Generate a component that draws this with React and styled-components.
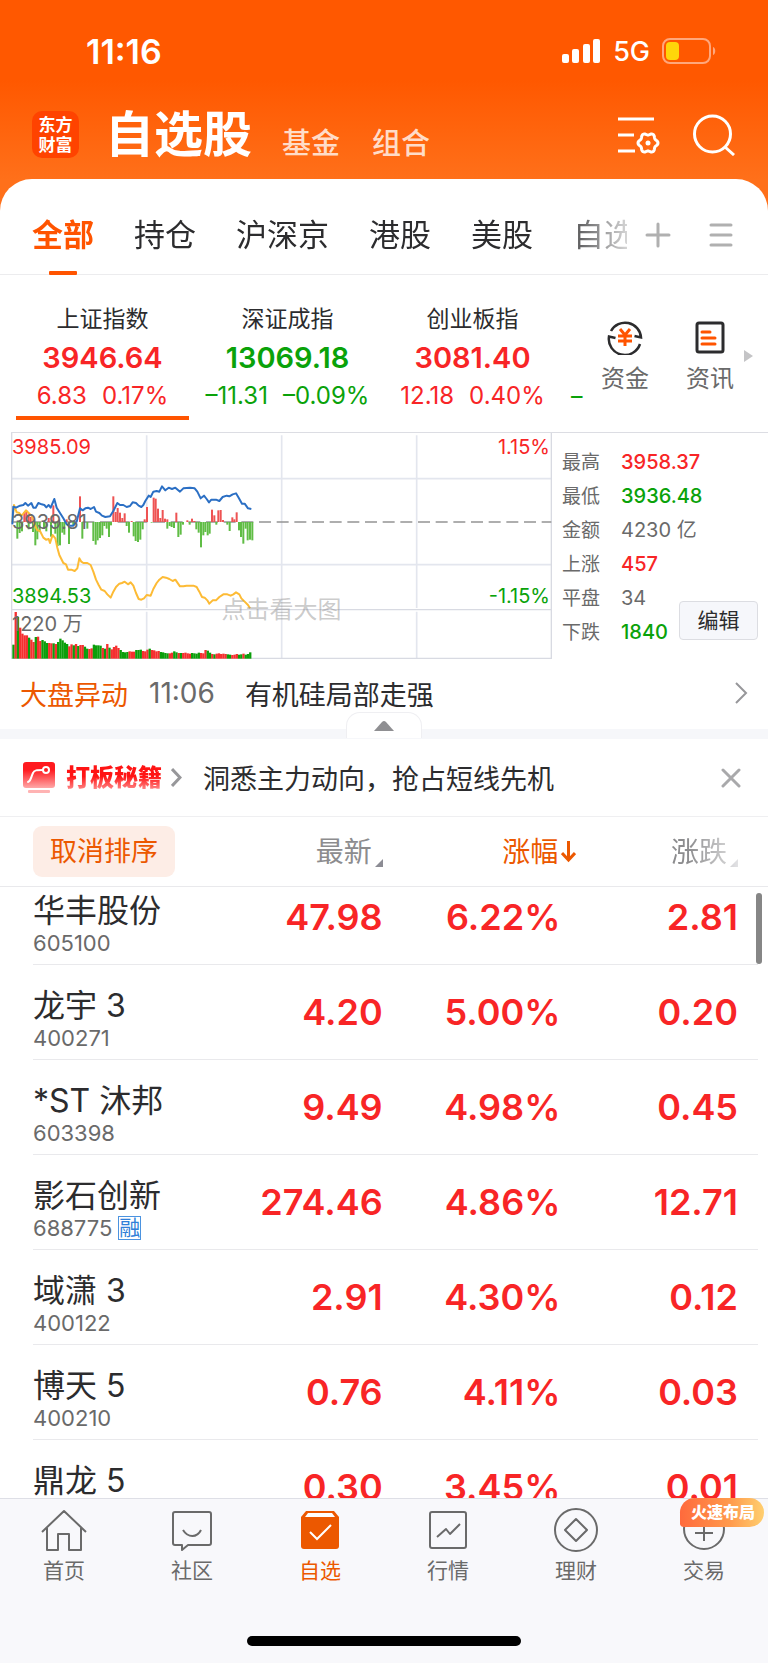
import React from 'react';
import styled, { createGlobalStyle } from 'styled-components';

const RED = '#f82526';
const GREEN = '#0aa20a';
const ORANGE = '#ff5400';
const DEEP_ORANGE = '#ec5800';
const DARK = '#2c2c2e';
const GREY = '#6a6a6a';

const GlobalStyle = createGlobalStyle`
    * {
        box-sizing: border-box;
    }

    body {
        margin: 0;
        background: white;
        color: ${DARK};
        font-family: Inter, 'Noto Sans CJK SC', sans-serif;
    }

    button {
        padding: 0;
        border: 0;
        background: none;
        color: inherit;
        font: inherit;
        cursor: pointer;
    }

    a {
        color: inherit;
        text-decoration: none;
    }

    svg {
        display: block;
        flex: none;
    }
`;

const Page = styled.div`
    display: flex;
    flex-direction: column;
    height: 100vh;
    overflow: hidden;
`;

/* ---------- header ---------- */

const Header = styled.header`
    background: linear-gradient(#ff5800 0, #ff5800 80px, #ff701a 180px, #ff701a 100%);
`;

const StatusBar = styled.div`
    display: flex;
    align-items: center;
    justify-content: space-between;
    height: 102px;
    padding: 0 52px 0 86px;
    color: white;
`;

const Clock = styled.time`
    font-size: 34px;
    font-weight: 600;
`;

const StatusIcons = styled.div`
    display: flex;
    align-items: center;
    gap: 12px;
    font-size: 27px;
    font-weight: 500;
`;

const TitleBar = styled.div`
    display: flex;
    align-items: center;
    height: 77px;
    padding: 0 33px 12px 32px;
    color: white;
`;

const Logo = styled.div`
    display: flex;
    align-items: center;
    justify-content: center;
    width: 47px;
    height: 47px;
    border-radius: 10px;
    background: #ff4300;
    font-size: 17px;
    font-weight: 700;
    line-height: 20px;
    text-align: center;
`;

const Titles = styled.nav`
    display: flex;
    flex: 1;
    align-items: flex-end;
    margin-left: 26px;
`;

const Title = styled.h1`
    margin: 0 30px 0 0;
    font-size: 49px;
    font-weight: 700;
    line-height: 58px;
`;

const SubTitle = styled.a`
    margin-right: 32px;
    color: #ffdcc8;
    font-size: 29px;
    font-weight: 500;
    line-height: 40px;
`;

const HeaderActions = styled.div`
    display: flex;
    gap: 33px;
`;

/* ---------- tabs ---------- */

const TabBar = styled.div`
    display: flex;
    align-items: center;
    height: 96px;
    padding-right: 35px;
    border-bottom: 1px solid #ececee;
    border-radius: 32px 32px 0 0;
    background: white;
`;

const TabList = styled.nav`
    display: flex;
    flex: 1;
    gap: 40px;
    height: 96px;
    min-width: 0;
    margin-right: 18px;
    padding-left: 32px;
    overflow: hidden;
    mask-image: linear-gradient(to left, rgba(0, 0, 0, 0.2), black 70px);
`;

const Tab = styled.a`
    position: relative;
    flex: none;
    color: ${(props) => (props.$active ? ORANGE : DARK)};
    font-size: 31px;
    font-weight: ${(props) => (props.$active ? 700 : 400)};
    line-height: 112px;

    &::after {
        position: absolute;
        bottom: 0;
        left: 50%;
        width: 28px;
        height: 4px;
        margin-left: -14px;
        border-radius: 1px;
        background: ${(props) => (props.$active ? ORANGE : 'transparent')};
        content: '';
    }
`;

const TabActions = styled.div`
    display: flex;
    gap: 38px;
    padding-top: 16px;
`;

/* ---------- indices ---------- */

const Indices = styled.section`
    display: flex;
    height: 157px;
    padding: 12px 15px 0 16px;
`;

const IndexList = styled.div`
    display: flex;
    flex: 1;
    gap: 12px;
    min-width: 0;
    overflow: hidden;
`;

const IndexCard = styled.a`
    display: flex;
    flex: none;
    flex-direction: column;
    align-items: center;
    width: 173px;
    height: 133px;
    border-bottom: 4px solid ${(props) => (props.$active ? ORANGE : 'transparent')};
    color: ${(props) => (props.$down ? GREEN : RED)};
    white-space: nowrap;
`;

const IndexName = styled.span`
    height: 48px;
    padding-top: 14px;
    color: ${DARK};
    font-size: 23px;
    line-height: 36px;
`;

const IndexValue = styled.strong`
    font-size: 29px;
    font-weight: 600;
    line-height: 46px;
`;

const IndexChange = styled.span`
    display: flex;
    gap: 15px;
    font-size: 24px;
    line-height: 30px;
`;

const NextIndex = styled.span`
    padding-top: 94px;
    color: ${GREEN};
    font-size: 23px;
    line-height: 30px;
`;

const Shortcuts = styled.div`
    display: flex;
    gap: 37px;
    padding-top: 32px;
`;

const Shortcut = styled.a`
    display: flex;
    flex-direction: column;
    align-items: center;
    gap: 6px;
    color: ${GREY};
    font-size: 24px;
    line-height: 36px;
`;

const MoreArrow = styled.i`
    align-self: flex-start;
    margin: 63px 0 0 10px;
    border: 6px solid transparent;
    border-right: 0;
    border-left: 9px solid #c4c4c6;
`;

/* ---------- chart ---------- */

const Market = styled.section`
    display: flex;
    margin-left: 11px;
    border-top: 1px solid #dcdde3;
`;

const Chart = styled.div`
    position: relative;
    flex: 1;
    height: 226px;
    font-size: 20px;
    line-height: 24px;

    svg {
        width: 100%;
        height: 100%;
    }
`;

const ChartLabel = styled.span`
    position: absolute;
    top: ${(props) => props.$top}px;
    ${(props) => (props.$right ? 'right: 2px' : 'left: 1px')};
    color: ${(props) => props.$color};
`;

const ChartHint = styled.span`
    position: absolute;
    top: 159px;
    right: 0;
    left: 0;
    color: rgba(130, 130, 130, 0.42);
    font-size: 24px;
    line-height: 36px;
    text-align: center;
`;

const Facts = styled.div`
    position: relative;
    width: 216px;
    padding: 12px 0 0 10px;
`;

const FactList = styled.dl`
    display: grid;
    grid-template-columns: 59px 1fr;
    grid-auto-rows: 34px;
    align-items: center;
    margin: 0;
    font-size: 20px;
    line-height: 33px;
`;

const FactName = styled.dt`
    color: ${GREY};
    font-size: 19px;
`;

const FactValue = styled.dd`
    margin: 0;
    color: ${(props) => props.$color};
    font-weight: ${(props) => (props.$color === GREY ? 400 : 500)};
`;

const EditButton = styled.button`
    position: absolute;
    right: 10px;
    bottom: 19px;
    width: 79px;
    height: 39px;
    border: 1px solid #dcdde2;
    border-radius: 4px;
    background: #f6f7fb;
    font-size: 21px;
    line-height: 36px;
`;

/* ---------- news and promo ---------- */

const News = styled.a`
    display: flex;
    align-items: center;
    height: 70px;
    padding: 0 20px 2px;
    font-size: 27px;
`;

const NewsTag = styled.span`
    margin-right: 21px;
    color: ${DEEP_ORANGE};
`;

const NewsTime = styled.time`
    margin-right: 30px;
    color: ${GREY};
    font-size: 28px;
`;

const NewsText = styled.span`
    flex: 1;
`;

const Band = styled.div`
    position: relative;
    height: 10px;
    background: #f6f7fa;
`;

const Handle = styled.button`
    position: absolute;
    bottom: 1px;
    left: 50%;
    display: flex;
    align-items: center;
    justify-content: center;
    width: 76px;
    height: 26px;
    border: 1px solid #efeff2;
    border-bottom: 0;
    margin-left: -38px;
    border-radius: 14px 14px 0 0;
    background: white;
`;

const Promo = styled.div`
    display: flex;
    align-items: center;
    height: 78px;
    padding: 0 27px 0 23px;
    border-bottom: 1px solid #efeff1;
    font-size: 27px;
`;

const PromoName = styled.b`
    margin: 0 9px 0 11px;
    background: linear-gradient(#ff1414 45%, #ffb0b0);
    background-clip: text;
    color: transparent;
    font-size: 24px;
    font-weight: 900;
    line-height: 32px;
`;

const PromoText = styled.span`
    flex: 1;
    margin-left: 21px;
`;

/* ---------- stock list ---------- */

const StockArea = styled.main`
    position: relative;
    flex: 1;
    min-height: 0;
    overflow: hidden;
`;

const StockTable = styled.table`
    display: block;

    thead,
    tbody {
        display: block;
    }
`;

const HeadRow = styled.tr`
    display: grid;
    grid-template-columns: 172px repeat(3, 1fr);
    align-items: center;
    height: 70px;
    padding: 0 30px 0 33px;
    border-bottom: 1px solid #e9e9ec;
`;

const HeadCell = styled.th`
    display: flex;
    justify-content: flex-end;
    padding: 0;
    font-weight: 400;

    &:first-child {
        justify-content: flex-start;
    }
`;

const ResetButton = styled.button`
    width: 142px;
    height: 51px;
    border-radius: 9px;
    background: #fdede6;
    color: ${DEEP_ORANGE};
    font-size: 27px;
    line-height: 51px;
`;

const SortButton = styled.button`
    display: flex;
    align-items: center;
    gap: 3px;
    margin-right: ${(props) => (props.$active ? '-16px' : '0')};
    color: ${(props) => (props.$active ? DEEP_ORANGE : '#8c8c8e')};
    font-size: 28px;
    line-height: 40px;
    mask-image: ${(props) => (props.$faded ? 'linear-gradient(to left, rgba(0, 0, 0, 0.25), black 50px)' : 'none')};
`;

const Corner = styled.i`
    align-self: flex-end;
    margin-bottom: 5px;
    border-bottom: 8px solid #8c8c94;
    border-left: 8px solid transparent;
`;

const Row = styled.tr`
    display: grid;
    grid-template-columns: 172px repeat(3, 1fr);
    align-items: end;
    height: 95px;
    margin: 0 10px 0 33px;
    padding: 0 20px 7px 0;
    border-bottom: 1px solid #e9e9ec;

    /* the list is scrolled a little way under its header */
    &:first-child {
        height: 78px;
    }
`;

const NameCell = styled.td`
    padding: 0;
`;

const StockName = styled.div`
    font-size: 32px;
    line-height: 36px;
    white-space: nowrap;
`;

const StockCode = styled.div`
    display: flex;
    align-items: center;
    gap: 6px;
    color: ${GREY};
    font-size: 22px;
    line-height: 28px;
`;

const MarginTag = styled.span`
    height: 24px;
    border: 1px solid #4b93e0;
    color: #2f7fd8;
    font-size: 21px;
    line-height: 21px;
`;

const NumberCell = styled.td`
    padding: 0 0 18px;
    color: ${RED};
    font-size: 36px;
    font-weight: 600;
    line-height: 44px;
    text-align: right;
`;

const Thumb = styled.div`
    position: absolute;
    top: 76px;
    right: 6px;
    width: 6px;
    height: 71px;
    border-radius: 3px;
    background: #868686;
`;

/* ---------- bottom navigation ---------- */

const BottomBar = styled.footer`
    position: relative;
    flex: none;
    height: 165px;
    border-top: 1px solid #dedfe6;
    background: #f8f8fb;
`;

const NavList = styled.nav`
    display: grid;
    grid-template-columns: repeat(6, 1fr);
    height: 137px;
    padding-top: 8px;
`;

const NavItem = styled.a`
    position: relative;
    display: flex;
    flex-direction: column;
    align-items: center;
    gap: 3px;
    color: ${(props) => (props.$active ? DEEP_ORANGE : GREY)};
    font-size: 21px;
    line-height: 30px;
`;

const Badge = styled.span`
    position: absolute;
    top: -9px;
    right: 4px;
    height: 29px;
    padding: 0 9px 0 11px;
    border-radius: 15px 15px 15px 4px;
    background: linear-gradient(90deg, #ff6a3c, #ff9a4c 60%, #ffcf70);
    color: white;
    font-size: 16px;
    font-weight: 900;
    line-height: 29px;
    white-space: nowrap;
`;

const HomeIndicator = styled.div`
    width: 274px;
    height: 10px;
    margin: 0 auto;
    border-radius: 5px;
    background: black;
`;

const tabs = ['全部', '持仓', '沪深京', '港股', '美股', '自选'];

const indices = [
    { name: '上证指数', value: '3946.64', change: '6.83', rate: '0.17%' },
    { name: '深证成指', value: '13069.18', change: '–11.31', rate: '–0.09%', down: true },
    { name: '创业板指', value: '3081.40', change: '12.18', rate: '0.40%' },
];

const facts = [
    ['最高', '3958.37', RED],
    ['最低', '3936.48', GREEN],
    ['金额', '4230 亿', GREY],
    ['上涨', '457', RED],
    ['平盘', '34', GREY],
    ['下跌', '1840', GREEN],
];

const stocks = [
    { name: '华丰股份', code: '605100', price: '47.98', rate: '6.22%', change: '2.81' },
    { name: '龙宇 3', code: '400271', price: '4.20', rate: '5.00%', change: '0.20' },
    { name: '*ST 沐邦', code: '603398', price: '9.49', rate: '4.98%', change: '0.45' },
    { name: '影石创新', code: '688775', price: '274.46', rate: '4.86%', change: '12.71', margin: true },
    { name: '域潇 3', code: '400122', price: '2.91', rate: '4.30%', change: '0.12' },
    { name: '博天 5', code: '400210', price: '0.76', rate: '4.11%', change: '0.03' },
    { name: '鼎龙 5', price: '0.30', rate: '3.45%', change: '0.01' },
];

const bluePoints =
    '37,298 40,245 48,248 60,242 70,240 76,234 84,242 94,234 100,248 107,248 115,234 125,238 133,240 139,247 146,240 152,248 163,222 170,248 180,264 190,280 200,298 208,302 220,302 230,290 240,250 248,256 256,250 264,248 272,252 282,246 288,260 298,264 306,272 316,276 330,274 340,258 352,234 360,240 370,240 380,246 390,243 398,232 408,234 416,242 424,246 430,240 436,228 446,212 452,216 460,200 470,198 478,200 486,184 496,196 506,188 516,192 526,188 540,200 550,190 570,188 584,190 592,200 602,220 612,212 620,222 627,232 634,224 648,224 658,228 668,216 680,212 688,214 698,208 708,205 716,218 726,236 734,236 744,250 754,252';

const yellowPoints =
    '37,292 42,240 50,262 58,264 64,272 70,266 78,256 86,264 96,274 104,300 112,316 120,318 130,338 138,344 146,342 150,354 158,330 166,340 172,368 178,390 184,402 190,414 198,418 204,434 214,434 224,438 232,430 238,400 244,410 250,414 262,414 272,420 280,440 288,464 296,480 304,494 314,498 322,508 332,518 340,500 348,486 358,476 366,474 374,470 384,478 392,472 400,482 408,504 416,522 424,524 432,520 440,510 452,512 460,492 470,474 478,464 488,456 498,458 508,462 518,468 526,464 540,484 550,484 560,482 580,482 590,486 598,500 606,516 614,518 622,526 628,536 638,526 648,526 658,516 670,508 682,508 692,512 700,508 708,502 718,508 724,520 734,530 744,540 750,550';

// [x, height] of the bars above and below the middle line
const upBars = [
    [73, 30], [79, 35], [86, 20], [92, 15], [146, 12], [160, 50], [200, 8], [240, 77], [340, 77], [347, 30],
    [353, 42], [360, 28], [367, 12], [374, 26], [395, 3], [434, 8], [441, 45], [461, 73], [467, 70], [474, 40],
    [481, 12], [488, 36], [495, 10], [502, 8], [529, 28], [562, 5], [576, 10], [583, 3], [636, 37], [643, 20],
    [655, 35], [662, 36], [669, 6], [697, 14], [703, 8], [710, 29],
];

const downBars = [
    [52, 50], [59, 33], [66, 28], [86, 22], [99, 30], [106, 70], [112, 52], [119, 30], [132, 20], [139, 28],
    [153, 44], [166, 35], [173, 72], [180, 70], [187, 32], [193, 38], [207, 66], [220, 10], [247, 50], [262, 20],
    [280, 57], [287, 68], [293, 55], [300, 48], [307, 40], [313, 12], [320, 20], [327, 45], [333, 10], [380, 12],
    [387, 32], [401, 43], [407, 57], [414, 60], [421, 53], [428, 22], [455, 2], [502, 20], [509, 12], [515, 15],
    [522, 18], [535, 45], [542, 38], [549, 8], [569, 8], [589, 22], [596, 32], [603, 76], [610, 40], [616, 30],
    [623, 40], [629, 35], [649, 8], [682, 8], [689, 27], [717, 25], [723, 45], [730, 65], [737, 20], [743, 55],
    [750, 53], [757, 55],
];

const volumes = [
    42, 140, 125, 93, 75, 70, 70, 63, 57, 50, 65, 66, 53, 56, 52, 47, 47, 46, 46, 44, 50, 60, 55, 48, 44, 37, 43, 40,
    44, 38, 41, 41, 36, 30, 29, 31, 42, 40, 40, 39, 32, 30, 44, 33, 28, 35, 39, 32, 26, 20, 19, 20, 22, 21, 21, 26,
    26, 27, 23, 22, 27, 30, 26, 25, 22, 23, 20, 19, 17, 16, 16, 18, 22, 19, 17, 17, 17, 18, 16, 15, 17, 16, 15, 18,
    17, 16, 26, 24, 18, 14, 13, 15, 16, 14, 15, 14, 13, 12, 11, 12, 14, 12, 13, 15, 12, 14, 19,
];

const volumeColors =
    'grgrrrrgrrgrrgggrrgrgggggrrgrgrrggrrggggrgrgrrrrggggrrrgggrrrgrrrrggggrrggrgrrrrggggrrrggrgrrrrrggrrrggrggg';

const PriceChart = () => (
    <svg viewBox="33 24 1623 678" preserveAspectRatio="none" aria-label="分时图" role="img">
        <path d="M33 161H1656M33 419H1656M440 31V549M845 31V702M1250 31V549M440 560V702M1250 560V702" stroke="#e3e6ee" strokeWidth="5" />
        <path d="M35 21V700H1654V21M35 554H1654" stroke="#d8dae2" strokeWidth="4" fill="none" />
        <path d="M35 291H1654" stroke="#949494" strokeWidth="5" strokeDasharray="36 17" />
        {upBars.map(([x, h]) => (
            <rect key={x} x={x - 3} y={291 - h} width="6" height={h} fill="#ee5353" />
        ))}
        {downBars.map(([x, h]) => (
            <rect key={x} x={x - 3} y="291" width="6" height={h} fill="#60bd45" />
        ))}
        {volumes.map((h, i) => (
            <rect
                key={i}
                x={37 + i * 6.7}
                y={701 - h}
                width="7"
                height={h}
                fill={volumeColors[i] === 'r' ? '#f52f2f' : '#0b9e0b'}
            />
        ))}
        <polyline points={yellowPoints} fill="none" stroke="#fdbb35" strokeWidth="6" strokeLinejoin="round" />
        <polyline points={bluePoints} fill="none" stroke="#2b6fc4" strokeWidth="6" strokeLinejoin="round" />
    </svg>
);

const SignalIcon = () => (
    <svg width="39" height="25" viewBox="0 0 39 25" fill="white">
        <rect x="0" y="15" width="7" height="9" rx="2" />
        <rect x="10" y="10" width="7" height="14" rx="2" />
        <rect x="21" y="5" width="7" height="19" rx="2" />
        <rect x="31" y="0" width="7" height="24" rx="2" />
    </svg>
);

const BatteryIcon = () => (
    <svg width="54" height="26" viewBox="0 0 54 26">
        <rect x="1" y="1" width="47" height="24" rx="7" fill="none" stroke="#ffa77c" strokeWidth="2" />
        <rect x="4" y="4" width="13" height="18" rx="4" fill="#ffd60a" />
        <path d="M51 9c3 1 3 7 0 8z" fill="#ffa77c" />
    </svg>
);

// six rounded teeth round (30, 29)
const gearPoints = Array.from({ length: 72 }, (_, i) => {
    const angle = (i * Math.PI) / 36;
    const radius = 9 + Math.cos(angle * 6);
    return `${30 + radius * Math.cos(angle)},${29 + radius * Math.sin(angle)}`;
}).join(' ');

const SettingsIcon = () => (
    <svg width="42" height="42" viewBox="0 0 42 42" fill="none" stroke="white" strokeWidth="3">
        <path d="M0 5h36M0 21h16M0 37h17" />
        <polygon points={gearPoints} strokeLinejoin="round" />
        <circle cx="30" cy="29" r="2.500" fill="white" stroke="none" />
    </svg>
);

const SearchIcon = () => (
    <svg width="42" height="42" viewBox="0 0 42 42" fill="none" stroke="white" strokeWidth="3">
        <circle cx="19.500" cy="20" r="18" />
        <path d="M32 33l9 8" strokeWidth="3" />
    </svg>
);

const PlusIcon = () => (
    <svg width="26" height="26" viewBox="0 0 26 26" stroke="#b0b0b0" strokeWidth="3" strokeLinecap="round">
        <path d="M2 13h22M13 2v22" />
    </svg>
);

const MenuIcon = () => (
    <svg width="24" height="26" viewBox="0 0 24 26" stroke="#b0b0b0" strokeWidth="3" strokeLinecap="round">
        <path d="M2 3h20M2 13h20M2 23h20" />
    </svg>
);

const FundsIcon = () => (
    <svg width="36" height="36" viewBox="0 0 36 36" fill="none" stroke="#2c2c2e" strokeWidth="2.500">
        <path d="M4 12A16 16 0 0 1 34 18.500l-6.500-1.500" />
        <path d="M33 25A16 16 0 0 1 2 17.500l6.500 1.500" />
        <path d="M13 10l5 6 5-6M11 17h14M11 22h14M18 16v11" stroke={ORANGE} strokeWidth="3" />
    </svg>
);

const ArticleIcon = () => (
    <svg width="30" height="36" viewBox="0 0 30 36" fill="none" stroke="#2c2c2e" strokeWidth="3">
        <rect x="2" y="4" width="26" height="29" rx="2" />
        <path d="M7 13h8M7 19h13M7 25h13" stroke={ORANGE} strokeLinecap="round" />
    </svg>
);

const Chevron = ({ width, height, weight = 3 }) => (
    <svg width={width} height={height} viewBox={`0 0 ${width} ${height}`} fill="none" stroke="#97979a" strokeWidth={weight}>
        <path d={`M1 1L${width - 2} ${height / 2}L1 ${height - 1}`} />
    </svg>
);

const PromoIcon = () => (
    <svg width="32" height="31" viewBox="0 0 32 31">
        <defs>
            <linearGradient id="promo" x1="0" y1="0" x2="0" y2="1">
                <stop offset="0.300" stopColor="#ff1a1f" />
                <stop offset="1" stopColor="#ffa8a8" />
            </linearGradient>
        </defs>
        <rect width="32" height="26" rx="3" fill="url(#promo)" />
        <rect x="5" y="28" width="22" height="3" rx="1" fill="#ffb3b3" />
        <path d="M5 20c3-1 3-5 5-9 1-3 4-3 10-3" fill="none" stroke="white" strokeWidth="2" strokeLinecap="round" />
        <circle cx="23" cy="8" r="3" fill="none" stroke="white" strokeWidth="2" />
    </svg>
);

const CloseIcon = () => (
    <svg width="20" height="20" viewBox="0 0 20 20" stroke="#a9a9ab" strokeWidth="3" strokeLinecap="round">
        <path d="M2 2l16 16M18 2L2 18" />
    </svg>
);

const SortArrow = () => (
    <svg width="15" height="22" viewBox="0 0 15 22" fill="none" stroke={DEEP_ORANGE} strokeWidth="3">
        <path d="M7.500 0v19M1 12l6.500 7L14 12" />
    </svg>
);

const NavIcon = ({ children }) => (
    <svg width="46" height="46" viewBox="0 0 46 46" fill="none" stroke="#6a6a6a" strokeWidth="2" strokeLinejoin="round">
        {children}
    </svg>
);

const navItems = [
    {
        name: '首页',
        icon: <path d="M1 25L23 4l22 21M6 21v22h11V27h11v16h12V21" />,
    },
    {
        name: '社区',
        icon: (
            <>
                <path d="M6 5h34a2 2 0 0 1 2 2v29a2 2 0 0 1-2 2H19l-6 5v-5H6a2 2 0 0 1-2-2V7a2 2 0 0 1 2-2z" />
                <path d="M14 23c5 8 14 8 18 0" />
            </>
        ),
    },
    {
        name: '自选',
        active: true,
        icon: (
            <>
                <path d="M9 4h28l5 6v29a3 3 0 0 1-3 3H7a3 3 0 0 1-3-3V10z" fill={DEEP_ORANGE} stroke="none" />
                <path d="M11 6h24l3 4H8z" fill="white" stroke="none" />
                <path d="M13 25l7 7 14-14" stroke="white" strokeLinejoin="miter" />
            </>
        ),
    },
    {
        name: '行情',
        icon: (
            <>
                <rect x="5" y="5" width="36" height="36" rx="2" />
                <path d="M12 30l9-8 4 5 10-10" />
            </>
        ),
    },
    {
        name: '理财',
        icon: (
            <>
                <circle cx="23" cy="23" r="21" />
                <path d="M23 12l11 11-11 11-11-11z" />
            </>
        ),
    },
    {
        name: '交易',
        badge: '火速布局',
        icon: (
            <>
                <circle cx="23" cy="22" r="20" />
                <path d="M14 26h18M23 17v17" />
            </>
        ),
    },
];

const App = () => (
    <Page>
        <GlobalStyle />
        <Header>
            <StatusBar>
                <Clock>11:16</Clock>
                <StatusIcons>
                    <SignalIcon />
                    <span>5G</span>
                    <BatteryIcon />
                </StatusIcons>
            </StatusBar>
            <TitleBar>
                <Logo>
                    东方
                    <br />
                    财富
                </Logo>
                <Titles>
                    <Title>自选股</Title>
                    <SubTitle href="#fund">基金</SubTitle>
                    <SubTitle href="#portfolio">组合</SubTitle>
                </Titles>
                <HeaderActions>
                    <button aria-label="设置">
                        <SettingsIcon />
                    </button>
                    <button aria-label="搜索">
                        <SearchIcon />
                    </button>
                </HeaderActions>
            </TitleBar>
            <TabBar>
                <TabList>
                    {tabs.map((tab, i) => (
                        <Tab key={tab} href="#tab" $active={i === 0}>
                            {tab}
                        </Tab>
                    ))}
                </TabList>
                <TabActions>
                    <button aria-label="添加">
                        <PlusIcon />
                    </button>
                    <button aria-label="菜单">
                        <MenuIcon />
                    </button>
                </TabActions>
            </TabBar>
        </Header>

        <Indices>
            <IndexList>
                {indices.map((index, i) => (
                    <IndexCard key={index.name} href="#index" $active={i === 0} $down={index.down}>
                        <IndexName>{index.name}</IndexName>
                        <IndexValue>{index.value}</IndexValue>
                        <IndexChange>
                            <span>{index.change}</span>
                            <span>{index.rate}</span>
                        </IndexChange>
                    </IndexCard>
                ))}
                <NextIndex>–</NextIndex>
            </IndexList>
            <Shortcuts>
                <Shortcut href="#funds">
                    <FundsIcon />
                    资金
                </Shortcut>
                <Shortcut href="#articles">
                    <ArticleIcon />
                    资讯
                </Shortcut>
            </Shortcuts>
            <MoreArrow />
        </Indices>

        <Market>
            <Chart>
                <PriceChart />
                <ChartLabel $top={2} $color={RED}>3985.09</ChartLabel>
                <ChartLabel $top={77} $color={GREY}>3939.81</ChartLabel>
                <ChartLabel $top={151} $color={GREEN}>3894.53</ChartLabel>
                <ChartLabel $top={179} $color={GREY}>1220 万</ChartLabel>
                <ChartLabel $top={2} $color={RED} $right>1.15%</ChartLabel>
                <ChartLabel $top={151} $color={GREEN} $right>-1.15%</ChartLabel>
                <ChartHint>点击看大图</ChartHint>
            </Chart>
            <Facts>
                <FactList>
                    {facts.map(([name, value, color]) => (
                        <React.Fragment key={name}>
                            <FactName>{name}</FactName>
                            <FactValue $color={color}>{value}</FactValue>
                        </React.Fragment>
                    ))}
                </FactList>
                <EditButton>编辑</EditButton>
            </Facts>
        </Market>

        <News href="#news">
            <NewsTag>大盘异动</NewsTag>
            <NewsTime>11:06</NewsTime>
            <NewsText>有机硅局部走强</NewsText>
            <Chevron width={13} height={22} weight={2} />
        </News>
        <Band>
            <Handle aria-label="收起">
                <svg width="20" height="10" viewBox="0 0 20 10" fill="#8f8f92">
                    <path d="M0 10L8 1q2-2 4 0l8 9z" />
                </svg>
            </Handle>
        </Band>
        <Promo>
            <PromoIcon />
            <PromoName>打板秘籍</PromoName>
            <Chevron width={11} height={19} />
            <PromoText>洞悉主力动向，抢占短线先机</PromoText>
            <button aria-label="关闭">
                <CloseIcon />
            </button>
        </Promo>

        <StockArea>
            <StockTable>
                <thead>
                    <HeadRow>
                        <HeadCell as="td">
                            <ResetButton>取消排序</ResetButton>
                        </HeadCell>
                        <HeadCell>
                            <SortButton>
                                最新
                                <Corner />
                            </SortButton>
                        </HeadCell>
                        <HeadCell>
                            <SortButton $active>
                                涨幅
                                <SortArrow />
                            </SortButton>
                        </HeadCell>
                        <HeadCell>
                            <SortButton $faded>
                                涨跌
                                <Corner />
                            </SortButton>
                        </HeadCell>
                    </HeadRow>
                </thead>
                <tbody>
                    {stocks.map((stock) => (
                        <Row key={stock.name}>
                            <NameCell>
                                <StockName>{stock.name}</StockName>
                                <StockCode>
                                    {stock.code || '\u00a0'}
                                    {stock.margin && <MarginTag>融</MarginTag>}
                                </StockCode>
                            </NameCell>
                            <NumberCell>{stock.price}</NumberCell>
                            <NumberCell>{stock.rate}</NumberCell>
                            <NumberCell>{stock.change}</NumberCell>
                        </Row>
                    ))}
                </tbody>
            </StockTable>
            <Thumb />
        </StockArea>

        <BottomBar>
            <NavList>
                {navItems.map((item) => (
                    <NavItem key={item.name} href="#nav" $active={item.active}>
                        <NavIcon>{item.icon}</NavIcon>
                        {item.name}
                        {item.badge && <Badge>{item.badge}</Badge>}
                    </NavItem>
                ))}
            </NavList>
            <HomeIndicator />
        </BottomBar>
    </Page>
);

export default App;
